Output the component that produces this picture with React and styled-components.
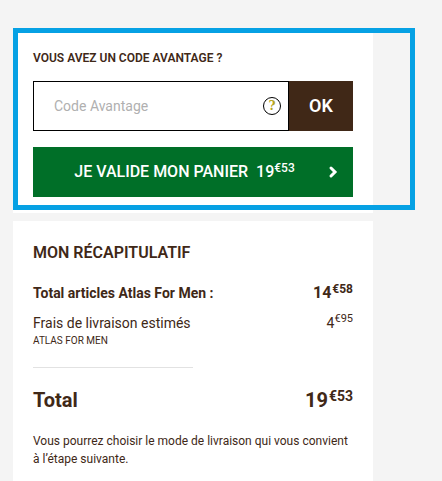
import React, { useState } from "react";
import styled, { createGlobalStyle } from "styled-components";

const GlobalStyle = createGlobalStyle`
  * {
    box-sizing: border-box;
  }

  body {
    margin: 0;
    background: #f4f4f4;
    color: #402817;
    font-family: Roboto, "Liberation Sans", sans-serif;
  }

  button,
  input {
    font-family: inherit;
  }
`;

const Page = styled.main`
  display: flex;
  flex-direction: column;
  gap: 8px;
  min-height: 100vh;
  padding: 28px 69px 0 13px;
`;

const Card = styled.section`
  position: relative;
  padding: 20px 20px ${({ $bottom }) => $bottom}px;
  flex-grow: ${({ $grow }) => ($grow ? 1 : 0)};
  background: #fff;
`;

/* frame drawn over the promo card, wider than the card itself */
const Highlight = styled.div`
  position: absolute;
  top: 0;
  right: -42px;
  bottom: 3px;
  left: 0;
  border: 5px solid #06a1e4;
  pointer-events: none;
`;

const CodeLabel = styled.label`
  display: block;
  margin-bottom: 13px;
  font-size: 12px;
  font-weight: 600;
  line-height: 20px;
  text-transform: uppercase;
`;

const CodeForm = styled.form`
  display: flex;
  height: 50px;
  margin-bottom: 16px;
`;

const CodeField = styled.div`
  display: flex;
  flex: 1;
  align-items: center;
  min-width: 0;
  padding-right: 7px;
  border: 1px solid #000;
`;

const CodeInput = styled.input`
  flex: 1;
  min-width: 0;
  height: 100%;
  padding: 0 0 0 20px;
  border: 0;
  outline: none;
  background: transparent;
  color: #402817;
  font-size: 14px;

  &::placeholder {
    color: #b0b0b0;
    opacity: 1;
  }
`;

const HelpButton = styled.button`
  display: flex;
  align-items: center;
  justify-content: center;
  width: 18px;
  height: 18px;
  padding: 0;
  border: 1px solid #000;
  border-radius: 50%;
  background: #fff;
  color: #b5a51e;
  font-family: "DejaVu Serif", serif;
  font-size: 12px;
  font-weight: 700;
  line-height: 16px;
  cursor: pointer;
`;

const OkButton = styled.button`
  width: 64px;
  padding: 0 0 2px;
  border: 0;
  background: #402817;
  color: #fff;
  font-size: 18px;
  font-weight: 600;
  cursor: pointer;
`;

const ValidateButton = styled.button`
  display: flex;
  align-items: center;
  width: 100%;
  height: 50px;
  padding: 0 15px 0 0;
  border: 0;
  background: #006f28;
  color: #fff;
  font-size: 16px;
  font-weight: 500;
  line-height: 20px;
  cursor: pointer;
`;

const ValidateText = styled.span`
  display: flex;
  flex: 1;
  justify-content: center;
  gap: 8px;
  padding-left: 8px;
`;

const Amount = styled.span`
  display: inline-flex;
  align-items: flex-start;
  gap: ${({ $gap }) => $gap || 0}px;
  font-size: ${({ $size }) => $size}px;
  line-height: 20px;
  white-space: nowrap;
`;

const Cents = styled.sup`
  font-size: ${({ $size }) => $size}px;
  line-height: 12px;
`;

const Title = styled.h2`
  margin: 0 0 18px;
  font-size: 16px;
  font-weight: 600;
  line-height: 24px;
  text-transform: uppercase;
`;

const Row = styled.div`
  display: flex;
  justify-content: space-between;
  margin-bottom: ${({ $space }) => $space || 0}px;
  font-size: ${({ $large }) => ($large ? 20 : 14)}px;
  font-weight: ${({ $strong }) => ($strong ? 700 : 400)};
  line-height: 20px;
`;

const Seller = styled.p`
  margin: 0;
  font-size: 10px;
  line-height: 16px;
  text-transform: uppercase;
`;

const Divider = styled.hr`
  width: 50%;
  height: 1px;
  margin: 18px 0 22px;
  border: 0;
  background: #e2e2e2;
`;

const Note = styled.p`
  margin: 0;
  font-size: 12px;
  line-height: 18px;
`;

const Price = ({ euros, cents, size, centsSize, gap }) => (
  <Amount $size={size} $gap={gap}>
    {euros}
    <Cents $size={centsSize}>€{cents}</Cents>
  </Amount>
);

const Chevron = () => (
  <svg width="10" height="14" viewBox="0 0 10 14" aria-hidden="true">
    <path
      d="M3 3l4 4-4 4"
      fill="none"
      stroke="#fff"
      strokeWidth="3"
      strokeLinecap="round"
    />
  </svg>
);

const App = () => {
  const [code, setCode] = useState("");

  return (
    <>
      <GlobalStyle />
      <Page>
        <Card $bottom={16}>
          <CodeLabel htmlFor="code">Vous avez un code avantage ?</CodeLabel>
          <CodeForm onSubmit={(event) => event.preventDefault()}>
            <CodeField>
              <CodeInput
                id="code"
                type="text"
                placeholder="Code Avantage"
                value={code}
                onChange={(event) => setCode(event.target.value)}
              />
              <HelpButton type="button">?</HelpButton>
            </CodeField>
            <OkButton type="submit">OK</OkButton>
          </CodeForm>
          <ValidateButton type="button">
            <ValidateText>
              JE VALIDE MON PANIER
              <Price euros="19" cents="53" size={16} centsSize={12} />
            </ValidateText>
            <Chevron />
          </ValidateButton>
          <Highlight />
        </Card>

        <Card $bottom={12} $grow>
          <Title>Mon récapitulatif</Title>
          <Row $strong $space={10}>
            <span>Total articles Atlas For Men :</span>
            <Price euros="14" cents="58" size={16} centsSize={12} gap={1} />
          </Row>
          <Row>
            <span>Frais de livraison estimés</span>
            <Price euros="4" cents="95" size={14} centsSize={11} />
          </Row>
          <Seller>Atlas For Men</Seller>
          <Divider />
          <Row $strong $large $space={22}>
            <span>Total</span>
            <Price euros="19" cents="53" size={20} centsSize={14} gap={1} />
          </Row>
          <Note>
            Vous pourrez choisir le mode de livraison qui vous convient à
            l’étape suivante.
          </Note>
        </Card>
      </Page>
    </>
  );
};

export default App;
